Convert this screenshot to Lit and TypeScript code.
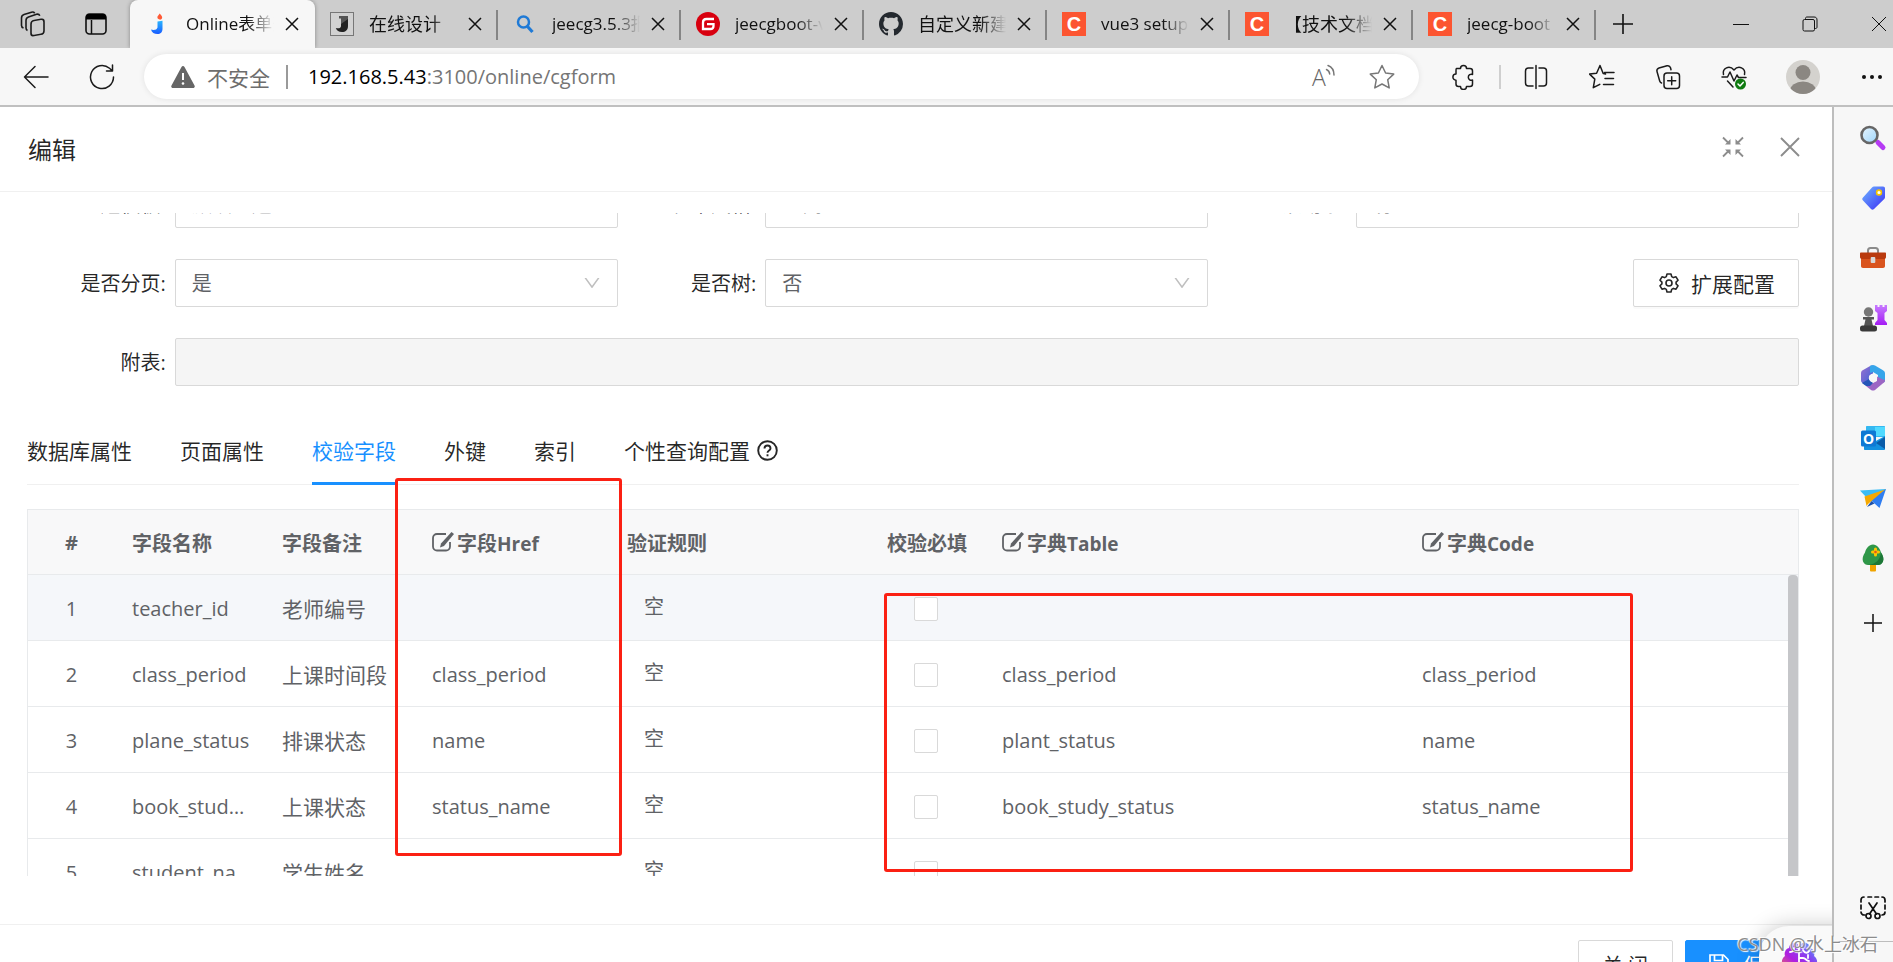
import { LitElement, html, css, svg, TemplateResult } from "lit";
import { customElement, state } from "lit/decorators.js";
import { classMap } from "lit/directives/class-map.js";

const closeGlyph = html`<svg width="14" height="14" viewBox="0 0 14 14" fill="none" stroke="#111" stroke-width="1.5"><path d="M1 1l12 12M13 1L1 13" /></svg>`;

const favJeecg = html`<svg width="24" height="24" viewBox="0 0 24 24"><defs><linearGradient id="jb" x1="0" y1="0" x2="0" y2="1"><stop offset="0" stop-color="#29b6ff" /><stop offset="1" stop-color="#1a5cff" /></linearGradient></defs><path d="M10.500 9.500l5-.8v8c0 3.600-2 5.300-5 5.300-3.200 0-5.800-1.500-6.500-4.500 2.500 1 6 .5 6.500-2z" fill="url(#jb)" /><path d="M12.500 1.500c2 1.800 3 3.200 2.600 4.600-.4 1.300-1.500 1.700-2.600 1.500-1.600-.3-2.500-1.500-2-3 .3-1 1.500-1.700 2-3.100z" fill="#ff5a36" /></svg>`;
const favDark = html`<svg width="24" height="24" viewBox="0 0 24 24"><rect x=".5" y=".5" width="23" height="23" fill="#d2d2d2" stroke="#777" /><path d="M11 4h7v10c0 4-2.500 6-6 6-3.200 0-5.300-1.400-6.200-4 2.500.8 5.200.4 5.200-2z" fill="#222" /><path d="M9 4h9v3l-7 5V6.500H9z" fill="#555" /></svg>`;
const favSearch = html`<svg width="24" height="24" viewBox="0 0 24 24" fill="none" stroke="#1f7ad6"><circle cx="10.500" cy="10" r="5.500" stroke-width="2.500" /><path d="M14.500 14.500l5 5.500" stroke-width="3.200" /></svg>`;
const favGitee = html`<svg width="24" height="24" viewBox="0 0 24 24"><circle cx="12" cy="12" r="12" fill="#d8000f" /><path d="M18 7h-7.500C8.500 7 7 8.500 7 10.500V17h7.500c1.800 0 3-1.300 3-3v-1.800H11" fill="none" stroke="#fff" stroke-width="2.300" /></svg>`;
const favGithub = html`<svg width="24" height="24" viewBox="0 0 16 16"><path fill="#24292f" d="M8 0C3.580 0 0 3.580 0 8c0 3.540 2.290 6.530 5.470 7.590.4.07.55-.17.55-.38 0-.19-.01-.82-.01-1.490-2.010.37-2.530-.49-2.690-.94-.09-.23-.48-.94-.82-1.130-.28-.15-.68-.52-.01-.53.63-.01 1.080.58 1.230.82.72 1.210 1.870.87 2.330.66.07-.52.28-.87.51-1.070-1.780-.2-3.640-.89-3.640-3.950 0-.87.31-1.590.82-2.150-.08-.2-.36-1.020.08-2.120 0 0 .67-.21 2.200.82.64-.18 1.320-.27 2-.27s1.360.09 2 .27c1.530-1.040 2.200-.82 2.200-.82.44 1.100.16 1.920.08 2.120.51.56.82 1.270.82 2.150 0 3.070-1.870 3.750-3.650 3.950.29.25.54.73.54 1.480 0 1.070-.01 1.930-.01 2.200 0 .21.15.46.55.38A8.010 8.010 0 0 0 16 8c0-4.420-3.580-8-8-8z" /></svg>`;
const favCsdn = html`<span class="csdn">C</span>`;

interface BrowserTab { title: string; icon: TemplateResult; latin?: boolean; }
const browserTabs: BrowserTab[] = [
  { title: "Online表单开发", icon: favJeecg, latin: true },
  { title: "在线设计", icon: favDark },
  { title: "jeecg3.5.3报表", icon: favSearch, latin: true },
  { title: "jeecgboot-vue3", icon: favGitee, latin: true },
  { title: "自定义新建页", icon: favGithub },
  { title: "vue3 setup 组件", icon: favCsdn, latin: true },
  { title: "【技术文档】", icon: favCsdn },
  { title: "jeecg-boot 开发", icon: favCsdn, latin: true },
];

const line = (body: unknown, size = 26, width = "1.5") => html`<svg width=${size} height=${size} viewBox="0 0 26 26" fill="none" stroke="#1b1b1b" stroke-width=${width} stroke-linejoin="round" stroke-linecap="round">${body}</svg>`;

const toolIcons: { name: string; icon: TemplateResult }[] = [
  { name: "分屏", icon: line(svg`<path d="M10 4H5.500A3 3 0 0 0 2.500 7v12a3 3 0 0 0 3 3H10M16 4h4.500a3 3 0 0 1 3 3v12a3 3 0 0 1-3 3H16M13 1.500v23" />`) },
  { name: "收藏夹", icon: line(svg`<path d="M16.500 10l-2.300-.5-3.200-8-3.400 7.700-7 .9 5.200 5-1.500 8.600 6.500-3.400M15.500 8.500h9.500M16 14.500h8.500M14.500 20.500h10" />`) },
  { name: "集锦", icon: line(svg`<rect x="9" y="9" width="15.500" height="15.500" rx="3" /><path d="M16.700 12.700v8M12.700 16.700h8M6.500 19c-1-.3-1.500-1-1.800-2L2 7.500C1.500 5.800 2.300 4.500 4 4l8-2.200c1.800-.4 3 .3 3.500 2l.5 2" />`) },
  { name: "浏览器概要", icon: line(svg`<path d="M2.500 10.500C1 4 8.500.8 13 6c4.500-5.200 12-2 10.500 4.500M1 13h5.500l2.500-5 4 9 3-6 1.500 2.500H25M6.500 17l5.500 6" /><circle cx="19.500" cy="20" r="5.500" fill="#0f7b10" stroke="none" /><path d="M17 20l2 2 3.200-3.600" stroke="#fff" />`) },
];

const sideIcons: { name: string; icon: TemplateResult }[] = [
  { name: "搜索", icon: html`<svg viewBox="0 0 28 28"><defs><linearGradient id="sg" x1="0" y1="0" x2="1" y2="1"><stop stop-color="#e8f6ff" /><stop offset="1" stop-color="#9ed6fb" /></linearGradient></defs><path d="M19 18.500l5 5" stroke="#b63bf4" stroke-width="5" stroke-linecap="round" /><circle cx="10.500" cy="11" r="8" fill="url(#sg)" stroke="#666" stroke-width="2.600" /></svg>` },
  { name: "购物", icon: html`<svg viewBox="0 0 28 28"><defs><linearGradient id="tg" x1="0" y1="0" x2="1" y2="1"><stop stop-color="#6fb6ff" /><stop offset="1" stop-color="#3a2df5" /></linearGradient></defs><path d="M15 2.500h9c1.300 0 2 .7 2 2V13c0 1-.3 1.600-1 2.300L15 25c-1 1-2 1-3 0l-8-8.500c-1-1-1-2 0-3l9-10c.6-.7 1.200-1 2-1z" fill="url(#tg)" /><circle cx="20" cy="8.500" r="2.400" fill="#fff" stroke="#f7c600" stroke-width="1.600" /></svg>` },
  { name: "工具", icon: html`<svg viewBox="0 0 28 28"><path d="M9 9V6.500C9 5 9.800 4 11.500 4h5C18.200 4 19 5 19 6.500V9" fill="none" stroke="#8b8b8b" stroke-width="2" /><path d="M2 12h24v10c0 1.200-.8 2-2 2H4c-1.200 0-2-.8-2-2z" fill="#d9541e" /><path d="M1 9.500C1 8.700 1.500 8.500 2 8.500h24c.6 0 1 .2 1 1V13c0 1.400-1 2-2 2H3c-1.200 0-2-.7-2-2z" fill="#b93a0e" /><rect x="11.700" y="13" width="4.600" height="6" rx="1" fill="#d8d8d8" /></svg>` },
  { name: "游戏", icon: html`<svg viewBox="0 0 28 28"><defs><linearGradient id="rg" x1="0" y1="0" x2="0" y2="1"><stop stop-color="#c77bff" /><stop offset="1" stop-color="#a41cf4" /></linearGradient></defs><path d="M16 1h2.500v2h2V1h3v2h2V1H28v6l-2.500 2v7l2.500 3v2H16v-2l2.500-3V9L16 7z" fill="url(#rg)" /><circle cx="9.500" cy="8" r="4.700" fill="#777" /><path d="M4 13h11v2.500h-2.500L14 22H5l1.500-6.500H4z" fill="#555" /><rect x="1" y="21.500" width="17" height="6" rx="2.500" fill="#3a3a3a" /></svg>` },
  { name: "Microsoft 365", icon: html`<svg viewBox="0 0 28 28"><defs><linearGradient id="mp" x1="0" y1="0" x2="1" y2="1"><stop stop-color="#9a6fd0" /><stop offset="1" stop-color="#3b62d6" /></linearGradient></defs><path d="M2 9.500C2 8 2.500 7 3.700 6.300L12 1.500h2v8l-4 2.500v5l-4 4-2-1.500c-1.300-.7-2-1.800-2-3.200z" fill="url(#mp)" /><path d="M11 2l1-.5c1.500-.8 2.700-.8 4 0l8 4.800c1.300.8 2 1.700 2 3.200V18l-7-4V11l-5-3-3 1z" fill="#36a5ea" /><path d="M26 16c0 1.600-.6 2.500-2 3.300L16 26c-1.300.8-2.700.8-4 0l-5-4 7-3 4-2v-4.500l6 3z" fill="#9c66c4" /><path d="M3 19l7-4 4 4-3 3H7z" fill="#2556b8" /><circle cx="14" cy="14" r="4.200" fill="#f7f7f7" /></svg>` },
  { name: "Outlook", icon: html`<svg viewBox="0 0 28 28"><path d="M8 2h17c.7 0 1 .4 1 1v10H7V3c0-.6.400-1 1-1z" fill="#35b8f1" /><path d="M16 3h10v9H16z" fill="#50d9ff" /><path d="M5 12l10 6 11-6v13c0 .6-.4 1-1 1H6c-.6 0-1-.4-1-1z" fill="#1490df" /><path d="M26 13v12l-9-6z" fill="#0a5ba8" /><rect x="2" y="6.500" width="15" height="16" rx="1.500" fill="#0f78d4" /><text x="9.500" y="19.500" font-size="14" font-weight="700" text-anchor="middle" fill="#fff" font-family="Open Sans">O</text></svg>` },
  { name: "Drop", icon: html`<svg viewBox="0 0 28 28"><path d="M1 6.500L27 5l-4 5-15 4z" fill="#3cbcf5" /><path d="M27 5l-6.500 19-5.500-5-5-4.500z" fill="#2f7df0" /><path d="M26 5.500L9 20l-1.500 2-2-9.500z" fill="#f5a800" /><path d="M8 23l4.500-6 3 2.500z" fill="#1b4fa8" /></svg>` },
  { name: "Tree", icon: html`<svg viewBox="0 0 28 28"><rect x="11" y="19" width="6" height="8.500" rx="1" fill="#f0a400" /><path d="M14 .5c4 0 7 4 8 8 2 3 3 6 2 9-1 2.500-3 3.500-5 3.500H9c-2 0-4-1-5-3.500-1-3 0-6 2-9 1-4 4-8 8-8z" fill="#2f9748" /><path d="M22 8.500c2 3 3 6 2 9-1 2.500-3 3.500-5 3.500H9c8-1 12-5 13-12.500z" fill="#1d7737" /><path d="M16.500 5v6M13.500 8h6" stroke="#ffc400" stroke-width="3" stroke-linecap="round" /><circle cx="16.500" cy="8" r="1.300" fill="#e2571e" /></svg>` },
];

const editGlyph = html`<svg class="edit" width="22" height="20" viewBox="0 0 22 20"><path d="M14 2H5a4 4 0 0 0-4 4v8.500a4 4 0 0 0 4 4h9a4 4 0 0 0 4-4V10" fill="none" stroke="#606266" stroke-width="1.800" /><path d="M19.500 0l2.500 2-10 12-4 1.500 1-4z" fill="#606266" /></svg>`;

interface FieldRow { name: string; note: string; href: string; table: string; code: string; }
const rows: FieldRow[] = [
  { name: "teacher_id", note: "老师编号", href: "", table: "", code: "" },
  { name: "class_period", note: "上课时间段", href: "class_period", table: "class_period", code: "class_period" },
  { name: "plane_status", note: "排课状态", href: "name", table: "plant_status", code: "name" },
  { name: "book_study_status", note: "上课状态", href: "status_name", table: "book_study_status", code: "status_name" },
  { name: "student_name_list", note: "学生姓名", href: "", table: "", code: "" },
];

@customElement("browser-chrome")
class BrowserChrome extends LitElement {
  static styles = css`
    :host { display: block; flex: none; color: #111; font-family: "Open Sans", "Noto Sans CJK SC", sans-serif; }
    button { border: 0; padding: 0; background: none; display: flex; align-items: center; justify-content: center; flex: none; }
    .strip { display: flex; height: 48px; background: #cdcdcd; overflow: hidden; }
    .lead { display: flex; align-items: center; width: 130px; box-sizing: border-box; padding-left: 20px; gap: 38px; }
    .tab { box-sizing: border-box; width: 183px; flex: none; display: flex; align-items: center; padding-left: 15px; position: relative; }
    .tab.active { width: 185px; padding-left: 17px; background: #f7f7f7; border-radius: 8px 8px 0 0; box-shadow: 0 0 4px rgba(0, 0, 0, 0.35); }
    .tab:not(.active)::after { content: ""; position: absolute; right: 0; top: 10px; bottom: 8px; width: 2px; background: #858585; }
    .favicon { width: 24px; height: 24px; display: flex; }
    .title { width: 88px; margin-left: 15px; font-size: 18px; line-height: 28px; white-space: nowrap; overflow: hidden; mask-image: linear-gradient(90deg, #000 70%, transparent 100%); }
    .title.latin { font-size: 17px; }
    .close { width: 24px; height: 24px; margin-left: 6px; }
    .csdn { width: 24px; height: 24px; background: #fc5531; color: #fff; font: 700 20px/24px "Liberation Sans", sans-serif; text-align: center; }
    .add { width: 54px; }
    .window { margin-left: auto; display: flex; padding-right: 4px; }
    .window button { width: 20px; margin-left: 49px; }
    .bar { display: flex; align-items: center; height: 57px; background: #f7f7f7; border-bottom: 2px solid #c0c0c0; padding: 0 10px 0 23px; }
    .back { width: 26px; }
    .reload { width: 26px; margin: 0 29px 0 40px; }
    .omni { flex: 1; height: 45px; border-radius: 23px; background: #fff; box-shadow: 0 0 6px rgba(0, 0, 0, 0.09); display: flex; align-items: center; padding: 0 24px 0 27px; }
    .secure { margin-left: 12px; font-size: 21px; color: #6d6d6d; }
    .rule { width: 2px; height: 24px; background: #9a9a9a; margin: 0 20px 0 16px; }
    .url { font-size: 20px; color: #757575; flex: 1; outline: none; }
    .url b { font-weight: 400; color: #000; }
    .omni button { width: 26px; margin-left: 33px; }
    .ext { width: 26px; margin: 0 23px 0 31px; }
    .split { width: 2px; height: 24px; background: #cfcfcf; }
    .tools { display: flex; gap: 40px; margin: 0 39px 0 22px; }
    .avatar { margin-right: 41px; }
  `;
  render() {
    return html`
      <div class="strip" role="tablist">
        <div class="lead">
          <button aria-label="工作区"><svg width="26" height="26" viewBox="0 0 26 26" fill="none" stroke="#1b1b1b" stroke-width="1.600" stroke-linejoin="round"><rect x="11" y="8" width="13" height="15" rx="3" transform="skewY(-10) translate(0 4)" /><path d="M7.500 19.500C6.500 19 6 18 6 17V9.500C6 8 7 6.500 8.500 6l8-2.700c1.500-.4 2.700 0 3.300 1.500M3.500 17C2 16.500 1.500 15.500 1.500 14.500V7C1.500 5.500 2.500 4 4 3.500L11.500 1.200c1.500-.4 2.500 0 3.200 1" /></svg></button>
          <button aria-label="标签操作"><svg width="24" height="24" viewBox="0 0 24 24"><rect x="2" y="2" width="20" height="20" rx="3.500" fill="none" stroke="#111" stroke-width="1.600" /><path d="M2 7.500V5c0-2 1-3 3-3h14c2 0 3 1 3 3v2.500z" fill="#000" /><path d="M7.500 8v14" stroke="#111" stroke-width="1.500" /></svg></button>
        </div>
        ${browserTabs.map((t, i) => html`
          <div class=${classMap({ tab: true, active: i === 0 })} role="tab" aria-selected=${i === 0}>
            <span class="favicon">${t.icon}</span><span class=${classMap({ title: true, latin: !!t.latin })}>${t.title}</span>
            <button class="close" aria-label="关闭标签页">${closeGlyph}</button>
          </div>`)}
        <button class="add" aria-label="新建标签页"><svg width="22" height="22" viewBox="0 0 22 22" stroke="#111" stroke-width="1.600"><path d="M11 1v20M1 11h20" /></svg></button>
        <div class="window">
          <button aria-label="最小化"><svg width="16" height="16" viewBox="0 0 16 16" stroke="#111"><path d="M0 8.500h16" /></svg></button>
          <button aria-label="还原"><svg width="16" height="16" viewBox="0 0 16 16" fill="none" stroke="#111"><rect x="1" y="3.500" width="11.500" height="11.500" rx="1.500" /><path d="M3.500 3V2.500C3.500 1.500 4 1 5 1h7c2 0 3 1 3 3v7c0 1-.5 1.500-1.500 1.500H13" /></svg></button>
          <button aria-label="关闭"><svg width="16" height="16" viewBox="0 0 16 16" stroke="#111"><path d="M1 1l14 14M15 1L1 15" /></svg></button>
        </div>
      </div>
      <div class="bar">
        <button class="back" aria-label="返回">${line(svg`<path d="M25 13H1.500M12 2.500L1.500 13 12 23.500" />`)}</button>
        <button class="reload" aria-label="刷新">${line(svg`<path d="M24.500 13A11.500 11.500 0 1 1 20.500 4.300L23 6.500M23.500 1v6h-6" />`)}</button>
        <div class="omni">
          <svg width="24" height="24" viewBox="0 0 24 24"><path d="M10.500 2c.7-1.300 2.300-1.300 3 0l10 18.500c.7 1.300 0 2.500-1.500 2.500H2C.5 23-.2 21.800.5 20.500z" fill="#666" /><path d="M12 8v7" stroke="#fff" stroke-width="2" /><circle cx="12" cy="18.500" r="1.300" fill="#fff" /></svg>
          <span class="secure">不安全</span><span class="rule"></span>
          <div class="url" role="textbox" aria-label="地址"><b>192.168.5.43</b>:3100/online/cgform</div>
          <button aria-label="大声朗读"><svg width="26" height="26" viewBox="0 0 26 26" fill="none" stroke="#777" stroke-width="1.500" stroke-linecap="round"><text x="2" y="22" font-size="23" font-family="Open Sans" font-weight="300" fill="#666" stroke="none">A</text><path d="M16.500 5.500c2 1 3 2.500 3.200 4.500M18 1.500c4 1.500 6 5 6 9.500" /></svg></button>
          <button aria-label="收藏"><svg width="26" height="26" viewBox="0 0 26 26" fill="none" stroke="#777" stroke-width="1.500" stroke-linejoin="round"><path d="M13 1.500l3.600 7.500 8.100 1.100-6 5.600 1.500 8.200L13 20l-7.200 3.900 1.500-8.200-6-5.600L9.400 9z" /></svg></button>
        </div>
        <button class="ext" aria-label="扩展">${line(svg`<path d="M6.500 4.500h4a3 3 0 0 1 6 0h3.500c1.500 0 2.500 1 2.500 2.500v3.500a3 3 0 1 0 0 5.500v4c0 1.500-1 2.500-2.500 2.500h-3.500a3 3 0 0 1-6 0H8.500c-1.500 0-2.500-1-2.500-2.500v-3.800a3 3 0 0 1 0-6.200V7c0-1.500 0-2.500.5-2.500z" />`)}</button>
        <span class="split"></span>
        <div class="tools">${toolIcons.map((t) => html`<button aria-label=${t.name}>${t.icon}</button>`)}</div>
        <button class="avatar" aria-label="个人资料"><svg width="34" height="34" viewBox="0 0 34 34"><defs><clipPath id="av"><circle cx="17" cy="17" r="17" /></clipPath></defs><g clip-path="url(#av)"><path d="M0 0h34v34H0z" fill="#d4d2ce" /><circle cx="17" cy="12.500" r="7.500" fill="#8b8782" /><ellipse cx="17" cy="31" rx="13" ry="9.500" fill="#8b8782" /></g></svg></button>
        <button aria-label="设置及其他"><svg width="22" height="6" viewBox="0 0 22 6" fill="#111"><circle cx="3" cy="3" r="2" /><circle cx="11" cy="3" r="2" /><circle cx="19" cy="3" r="2" /></svg></button>
      </div>`;
  }
}

@customElement("edge-sidebar")
class EdgeSidebar extends LitElement {
  static styles = css`
    :host { flex: none; width: 61px; box-sizing: border-box; display: flex; flex-direction: column; align-items: center; background: #f7f7f7; border-left: 2px solid #bdbdbd; padding: 17px 0 20px 19px; }
    button { border: 0; padding: 0; background: none; width: 28px; height: 28px; margin-bottom: 32px; display: block; }
    button svg { width: 28px; height: 28px; display: block; }
    .plus { margin-top: 5px; }
    .grow { flex: 1; }
    .snip { margin-bottom: 19px; }
    hr { align-self: stretch; flex: none; border: 0; height: 1px; background: #bdbdbd; margin: 0 0 0 -19px; }
  `;
  render() {
    return html`
      ${sideIcons.map((s) => html`<button aria-label=${s.name}>${s.icon}</button>`)}
      <button class="plus" aria-label="自定义"><svg viewBox="0 0 28 28" stroke="#111" stroke-width="1.500"><path d="M14 5v18M5 14h18" /></svg></button>
      <span class="grow"></span>
      <button class="snip" aria-label="屏幕截图"><svg viewBox="0 0 28 28" fill="none" stroke="#111" stroke-width="1.700" stroke-linecap="round"><path d="M6 21H5c-1.500 0-3-1.500-3-3M2 15v-4M2 8V6c0-2 1-3 3-3M9 3h3.500M16 3h3.500M23 3c2 0 3 1 3 3v2M26 11v4M26 18c0 2-1 3-3 3M10 9l7.500 11M18 9l-7.500 11" /><circle cx="9.500" cy="22" r="2.500" /><circle cx="18.500" cy="22" r="2.500" /></svg></button>
      <hr />`;
  }
}

@customElement("app-root")
class AppRoot extends LitElement {
  @state() private tab = 2;

  static styles = css`
    :host { display: flex; flex-direction: column; height: 100vh; overflow: hidden; position: relative; background: #fff; color: rgba(0, 0, 0, 0.85); font-family: "Open Sans", "Noto Sans CJK SC", sans-serif; font-size: 20px; }
    button { font-family: inherit; }
    .work { flex: 1; min-height: 0; display: flex; }
    .drawer { flex: 1; min-width: 0; display: flex; flex-direction: column; position: relative; overflow: hidden; }
    .head { flex: none; height: 84px; display: flex; align-items: center; border-bottom: 1px solid #f0f0f0; padding: 0 30px 0 28px; }
    .head h1 { flex: 1; margin: 0; padding-top: 2px; font-size: 24px; line-height: 32px; font-weight: 400; }
    .icon-btn { border: 0; background: none; padding: 0; width: 24px; height: 24px; margin: 0 0 4px 33px; display: flex; }
    .scroll { flex: 1; min-height: 0; margin: 21px 33px 48px 27px; overflow: hidden; }
    /* The form opens scrolled part of the way past its first row. */
    .form { display: grid; grid-template-columns: repeat(3, 1fr); row-gap: 31px; margin: -33px 0 0; }
    .field { display: grid; grid-template-columns: 25% 1fr; align-items: center; position: relative; }
    .field label { text-align: right; padding: 2px 9px 0 0; font-size: 20px; line-height: 28px; }
    .wide { grid-column: 1 / -1; grid-template-columns: calc(25% / 3) 1fr; }
    select, .wide input { box-sizing: border-box; width: 100%; height: 48px; border: 1px solid #d9d9d9; border-radius: 2px; background: #fff; font: 20px "Open Sans", "Noto Sans CJK SC", sans-serif; color: #606266; appearance: none; padding: 0 40px 0 16px; }
    .wide input { background: #f5f5f5; }
    .arrow { position: absolute; right: 18px; top: 16px; pointer-events: none; }
    .config { justify-self: end; height: 48px; box-sizing: border-box; border: 1px solid #d9d9d9; border-radius: 2px; background: #fff; box-shadow: 0 2px 0 rgba(0, 0, 0, 0.02); padding: 0 23px 0 25px; display: flex; align-items: center; gap: 12px; font-size: 21px; color: rgba(0, 0, 0, 0.85); }
    .tabs { margin-top: 32px; height: 67px; box-sizing: border-box; display: flex; gap: 48px; border-bottom: 1px solid #f0f0f0; }
    .tabs button { box-sizing: border-box; border: 0; border-bottom: 3px solid transparent; background: none; padding: 0; height: 67px; display: flex; align-items: center; gap: 7px; font-size: 21px; color: rgba(0, 0, 0, 0.85); white-space: nowrap; }
    .tabs button.on { color: #1890ff; border-bottom-color: #1890ff; }
    .grid { margin-top: 24px; position: relative; border: 1px solid #e8eaec; }
    table { width: 100%; table-layout: fixed; border-spacing: 0; color: #606266; }
    th, td { box-sizing: border-box; border-bottom: 1px solid #e8eaec; padding: 0 0 0 15px; text-align: left; white-space: nowrap; overflow: hidden; text-overflow: ellipsis; }
    th { height: 65px; background: #f8f8f9; font-size: 20px; font-weight: 700; }
    th span { font-size: 19px; }
    td { height: 66px; font-size: 20px; line-height: 28px; padding: 3px 15px 0; }
    td.cn { font-size: 21px; padding-right: 0; }
    td.empty { padding: 0 0 1px 32px; }
    td.check { padding: 2px 0 0 42px; }
    tr.hover td { background: #f5f7fa; }
    th.num { text-align: center; padding: 0 2px 0 0; }
    td.num { text-align: center; padding: 3px 2px 0 0; }
    .edit { vertical-align: -1px; margin-right: 3px; }
    .check input { appearance: none; display: block; box-sizing: border-box; width: 24px; height: 24px; margin: 0; border: 1px solid #d9d9d9; border-radius: 2px; background: #fff; }
    .thumb { position: absolute; top: 65px; right: 0; bottom: 0; width: 10px; background: #c5c6c9; border-radius: 4px; }
    .c1 { width: 89px; } .c2 { width: 150px; } .c3 { width: 150px; } .c4 { width: 195px; } .c5 { width: 260px; } .c6 { width: 115px; } .c7 { width: 420px; }
    .foot { flex: none; box-sizing: border-box; height: 38px; border-top: 1px solid #f0f0f0; padding: 15px 33px 0 0; display: flex; justify-content: flex-end; align-items: flex-start; gap: 12px; overflow: hidden; }
    .foot button { flex: none; box-sizing: border-box; height: 48px; border: 1px solid #d9d9d9; border-radius: 2px; background: #fff; font-size: 20px; padding: 0 24px; display: flex; align-items: center; gap: 14px; color: rgba(0, 0, 0, 0.85); }
    .foot .save { background: #1890ff; border-color: #1890ff; color: #fff; padding: 0 15px 0 23px; }
    .assist { position: absolute; left: calc(100% - 73px); top: calc(100% - 36px); width: 120px; height: 80px; border-radius: 30px; background: #f9f9f9; box-shadow: 0 0 22px rgba(0, 0, 0, 0.22); }
    .assist svg { position: absolute; left: 21px; top: 16px; }
    .mark { position: absolute; border: 3px solid #fb2013; border-radius: 3px; box-sizing: border-box; pointer-events: none; }
    .mark.a { left: 395px; top: 478px; width: 227px; height: 378px; }
    .mark.b { left: 884px; top: 593px; width: 749px; height: 279px; }
    .stamp { position: absolute; right: 15px; bottom: 4px; font-size: 18px; line-height: 28px; color: #8c8c8c; text-shadow: 1px 1px 1px #fff, -1px -1px 1px #fff; white-space: nowrap; }
  `;

  private select(id: string, label: string, value: string) {
    return html`<div class="field"><label for=${id}>${label}:</label><select id=${id}><option>${value}</option></select>
      <svg class="arrow" width="16" height="16" viewBox="100 100 824 824" fill="#bfbfbf"><path d="M884 256h-75c-5.100 0-9.900 2.500-12.900 6.600L512 654.200 227.900 262.600c-3-4.100-7.800-6.600-12.900-6.600h-75c-6.500 0-10.300 7.400-6.500 12.700l352.600 486.100c12.800 17.600 39 17.600 51.700 0l352.600-486.100c3.900-5.300.1-12.700-6.400-12.700z" /></svg></div>`;
  }

  render() {
    const tabs = ["数据库属性", "页面属性", "校验字段", "外键", "索引", "个性查询配置"];
    return html`
      <browser-chrome></browser-chrome>
      <div class="work">
        <main class="drawer">
          <header class="head">
            <h1>编辑</h1>
            <button class="icon-btn" aria-label="退出全屏"><svg width="24" height="24" viewBox="0 0 24 24" fill="#8c8c8c" stroke="#8c8c8c" stroke-width="1.800"><path d="M2 2.500l5 5M22 2.500l-5 5M2 21.500l5-5M22 21.500l-5-5" /><path d="M9.500 9.500V4L4 9.500zM14.500 9.500V4L20 9.500zM9.500 14.500V20L4 14.500zM14.500 14.500V20l5.500-5.500z" stroke="none" /></svg></button>
            <button class="icon-btn" aria-label="关闭窗口"><svg width="24" height="24" viewBox="0 0 24 24" stroke="#8c8c8c" stroke-width="1.900"><path d="M3 3l18 18M21 3L3 21" /></svg></button>
          </header>
          <div class="scroll">
            <form class="form">
              ${this.select("theme", "主题模板", "默认主题")}
              ${this.select("style", "表单风格", "一列")}
              ${this.select("scrollbar", "滚动条", "有")}
              ${this.select("page", "是否分页", "是")}
              ${this.select("tree", "是否树", "否")}
              <button type="button" class="config"><svg width="20" height="20" viewBox="0 0 20 20" fill="none" stroke="#262626" stroke-width="1.600" stroke-linejoin="round"><path d="M8 1h4l.7 2.600 1.700 1 2.600-.8 2 3.400-1.900 1.900v1.800l1.900 1.900-2 3.400-2.600-.8-1.700 1L12 19H8l-.7-2.600-1.700-1-2.600.8-2-3.400 1.900-1.900V9.100L1 7.200l2-3.400 2.600.8 1.700-1z" /><circle cx="10" cy="10" r="3" /></svg>扩展配置</button>
              <div class="field wide"><label for="sub">附表:</label><input id="sub" type="text" disabled /></div>
            </form>
            <div class="tabs" role="tablist">
              ${tabs.map((t, i) => html`<button role="tab" aria-selected=${i === this.tab} class=${classMap({ on: i === this.tab })} @click=${() => (this.tab = i)}>${t}${i === 5 ? html`<svg width="21" height="21" viewBox="0 0 21 21" fill="none" stroke="#262626" stroke-width="1.900"><circle cx="10.500" cy="10.500" r="9.300" /><path d="M7.500 8.500c0-4 6-4 6 0 0 2-3 2-3 4.200" /><path d="M10.500 14.300v2" /></svg>` : ""}</button>`)}
            </div>
            <div class="grid">
              <table>
                <colgroup><col class="c1" /><col class="c2" /><col class="c3" /><col class="c4" /><col class="c5" /><col class="c6" /><col class="c7" /><col /></colgroup>
                <thead><tr><th class="num">#</th><th>字段名称</th><th>字段备注</th><th>${editGlyph}字段<span>Href</span></th><th>验证规则</th><th>校验必填</th><th>${editGlyph}字典<span>Table</span></th><th>${editGlyph}字典<span>Code</span></th></tr></thead>
                <tbody>
                  ${rows.map((r, i) => html`<tr class=${classMap({ hover: i === 0 })}>
                    <td class="num">${i + 1}</td><td>${r.name}</td><td class="cn">${r.note}</td><td>${r.href}</td><td class="empty">空</td>
                    <td class="check"><input type="checkbox" aria-label="校验必填 ${r.name}" /></td><td>${r.table}</td><td>${r.code}</td></tr>`)}
                </tbody>
              </table>
              <div class="thumb"></div>
            </div>
          </div>
          <footer class="foot">
            <button>关 闭</button>
            <button class="save"><svg width="20" height="20" viewBox="0 0 20 20" fill="none" stroke="#fff" stroke-width="1.700"><path d="M1 1h13.500L19 5.500V19H1zM5.500 1v5.500h8V1" /><circle cx="10" cy="12.500" r="2.500" /></svg>保存</button>
          </footer>
          <div class="assist"><svg width="38" height="38" viewBox="0 0 38 38"><defs><linearGradient id="br" x1="0" y1="1" x2="1" y2="0"><stop stop-color="#ff8a3d" /><stop offset=".4" stop-color="#b01ee0" /><stop offset=".65" stop-color="#8a3df0" /><stop offset="1" stop-color="#3db4ff" /></linearGradient></defs><path d="M18 2c-4-3-9 0-9 4-4 1-5 5-4 8-4 3-4 8-1 11 0 6 6 9 14 9h3c8 0 14-3 14-9 3-3 3-8-1-11 1-3 0-7-4-8 0-4-5-7-9-4z" fill="url(#br)" /><path d="M19 2v34M6 23h12M10 10c3 0 4-2 4-4M23 8c2 4 5 3 6 1M19 16h4c3 0 3 3 6 3M28 13v3" fill="none" stroke="#fff" stroke-width="1.800" stroke-linecap="round" /></svg></div>
        </main>
        <edge-sidebar></edge-sidebar>
      </div>
      <div class="mark a"></div>
      <div class="mark b"></div>
      <span class="stamp">CSDN @水上冰石</span>`;
  }
}
